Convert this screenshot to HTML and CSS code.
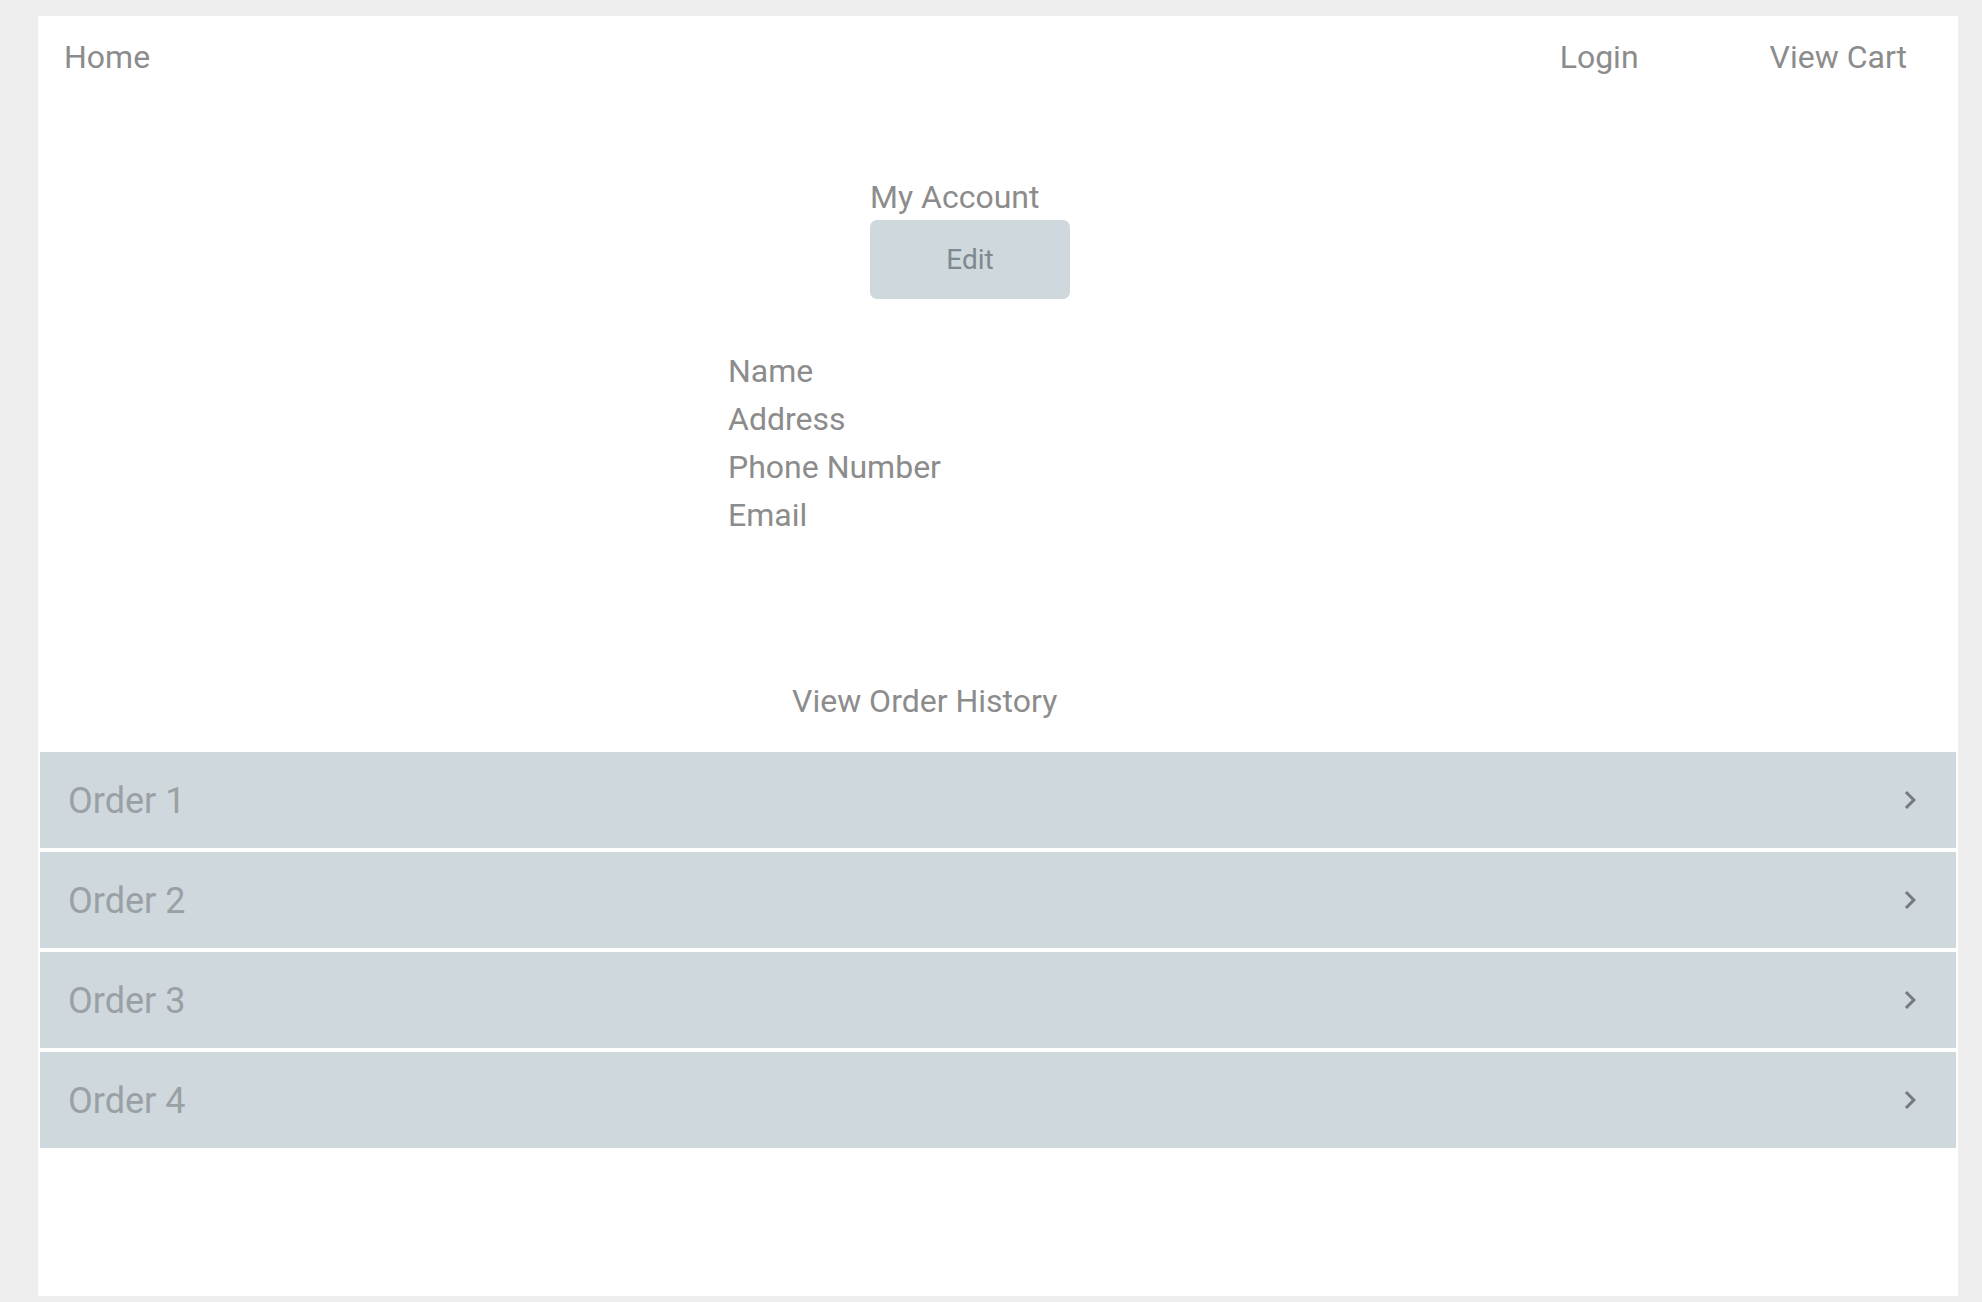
FILE: index.html
```html
<!DOCTYPE html>
<html lang="en">
<head>
<meta charset="utf-8">
<title>My Account</title>
<link rel="stylesheet" href="styles.css">
</head>
<body>
<div class="panel">
  <nav class="nav">
    <a class="nav-link home">Home</a>
    <div class="nav-right">
      <a class="nav-link">Login</a>
      <a class="nav-link">View Cart</a>
    </div>
  </nav>
  <section class="account">
    <div class="account-title">My Account</div>
    <button class="edit-btn">Edit</button>
  </section>
  <ul class="details">
    <li>Name</li>
    <li>Address</li>
    <li>Phone Number</li>
    <li>Email</li>
  </ul>
  <div class="history-title">View Order History</div>
  <div class="orders">
    <div class="order"><span class="order-label">Order 1</span><svg class="chev" viewBox="0 0 24 24"><path d="M10 6L8.59 7.41 13.17 12l-4.58 4.59L10 18l6-6z"/></svg></div>
    <div class="order"><span class="order-label">Order 2</span><svg class="chev" viewBox="0 0 24 24"><path d="M10 6L8.59 7.41 13.17 12l-4.58 4.59L10 18l6-6z"/></svg></div>
    <div class="order"><span class="order-label">Order 3</span><svg class="chev" viewBox="0 0 24 24"><path d="M10 6L8.59 7.41 13.17 12l-4.58 4.59L10 18l6-6z"/></svg></div>
    <div class="order"><span class="order-label">Order 4</span><svg class="chev" viewBox="0 0 24 24"><path d="M10 6L8.59 7.41 13.17 12l-4.58 4.59L10 18l6-6z"/></svg></div>
  </div>
</div>
</body>
</html>
```

FILE: styles.css
```css
html, body {
  margin: 0;
  padding: 0;
}
body {
  background: #eeeeee;
  font-family: Roboto, "Liberation Sans", sans-serif;
  color: #8c8c8c;
  padding: 16px 24px 6px 38px;
  height: 1302px;
  box-sizing: border-box;
}
.panel {
  background: #ffffff;
  width: 1920px;
  height: 1280px;
  box-sizing: border-box;
}
.nav {
  display: flex;
  justify-content: space-between;
  padding: 17px 51px 0 26px;
  font-size: 32px;
  line-height: 48px;
}
.nav-link {
  color: #8c8c8c;
  text-decoration: none;
}
.nav-right {
  display: flex;
  gap: 131px;
}
.account {
  margin: 96px 0 0 832px;
  display: flex;
  flex-direction: column;
  align-items: flex-start;
}
.account-title {
  font-size: 32px;
  line-height: 40px;
}
.edit-btn {
  margin-top: 3px;
  width: 200px;
  height: 79px;
  border: none;
  border-radius: 7px;
  background: #cfd8dc;
  color: #7c8a90;
  font-family: Roboto, "Liberation Sans", sans-serif;
  font-size: 28px;
  padding: 0;
}
.details {
  list-style: none;
  margin: 48px 0 0 690px;
  padding: 0;
  font-size: 32px;
  line-height: 48px;
}
.history-title {
  margin: 138px 0 0 754px;
  font-size: 32px;
  line-height: 48px;
}
.orders {
  margin: 27px 2px 0 2px;
  display: flex;
  flex-direction: column;
  gap: 4px;
}
.order {
  height: 96px;
  background: #cfd8dc;
  display: flex;
  align-items: center;
  justify-content: space-between;
  padding: 2px 28px 0 28px;
  box-sizing: border-box;
}
.order-label {
  font-size: 36px;
  color: #9aa1a4;
}
.chev {
  width: 36px;
  height: 36px;
  fill: #777b7d;
  margin-top: -2px;
}
```
